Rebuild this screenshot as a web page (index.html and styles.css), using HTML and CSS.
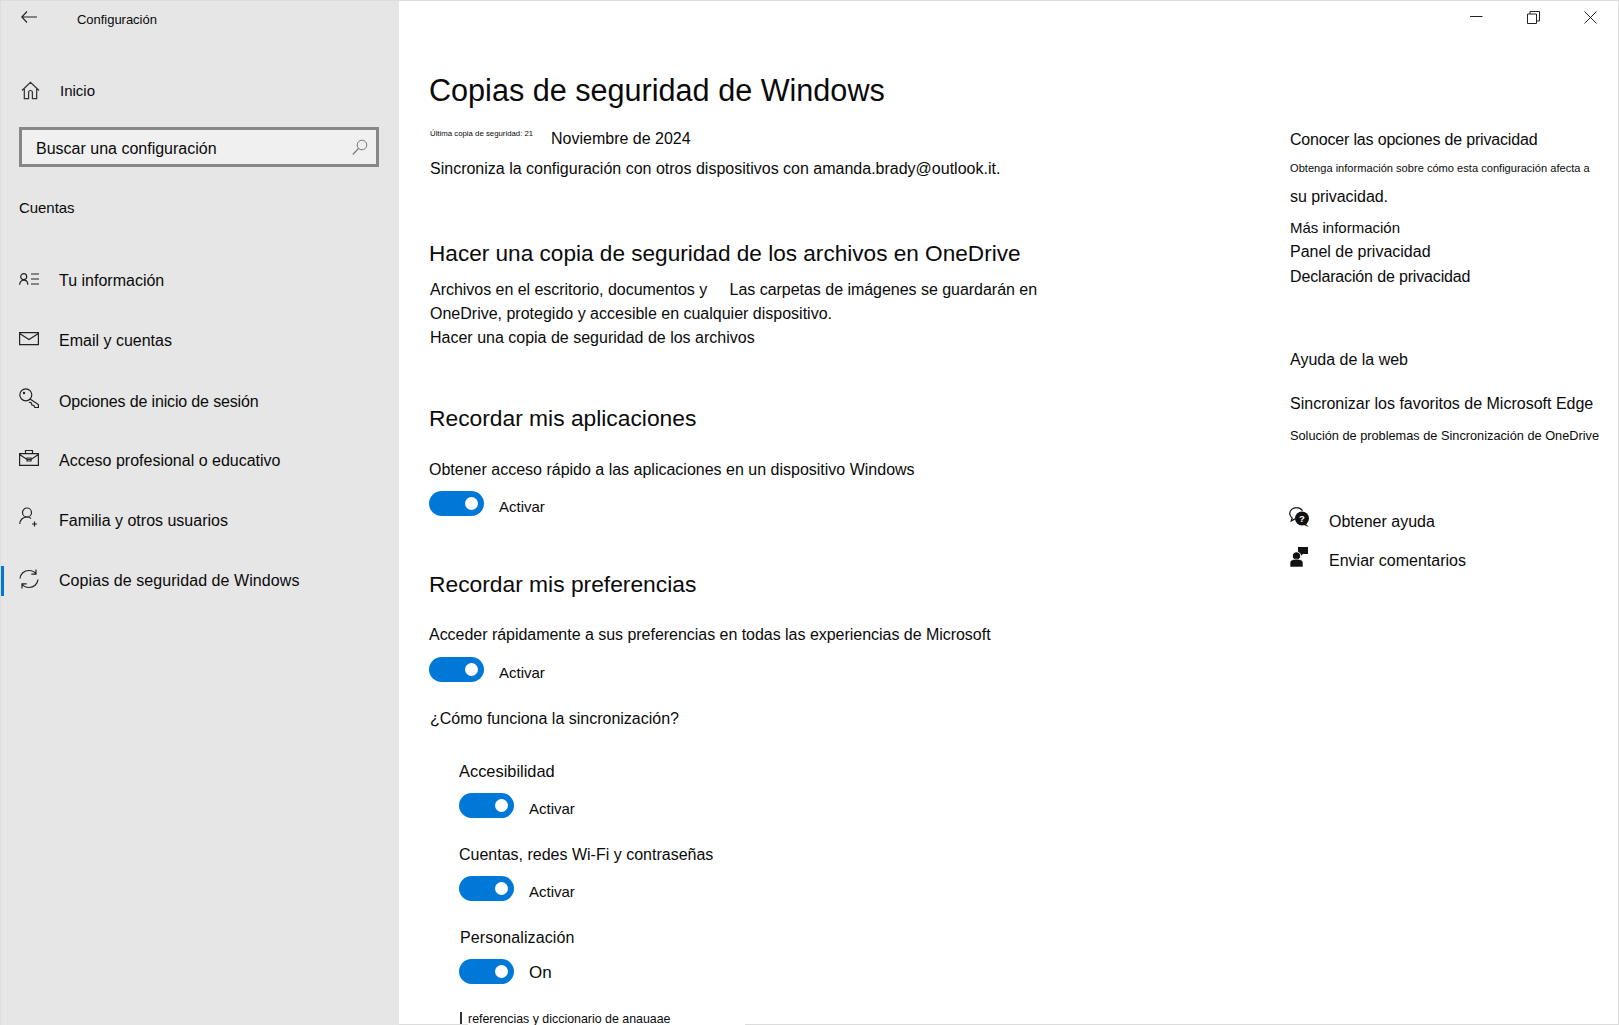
FILE: index.html
```html
<!DOCTYPE html>
<html lang="es">
<head>
<meta charset="utf-8">
<title>Configuración</title>
<link rel="stylesheet" href="styles.css">
</head>
<body>
<div class="window">
  <aside class="sidebar">
    <div class="titlebar">
      <svg class="back" viewBox="0 0 16 12" width="16" height="12"><path d="M6 .5.8 6 6 11.500M.8 6H16" fill="none" stroke="#222" stroke-width="1.100"/></svg>
      <span class="apptitle">Configuración</span>
    </div>
    <div class="home">
      <svg class="ico" viewBox="0 0 20 20" width="19" height="19"><path d="M1 10 10 1.500 19 10M3.500 8v10.500h4.500v-6.500a2 2 0 0 1 4 0v6.500h4.500V8" fill="none" stroke="#333" stroke-width="1.300"/></svg>
      <span>Inicio</span>
    </div>
    <div class="search">
      <span class="search-text">Buscar una configuración</span>
      <svg viewBox="0 0 16 16" width="16" height="16"><circle cx="10" cy="6" r="4.800" fill="none" stroke="#777" stroke-width="1"/><path d="M6.500 9.500 .8 15.500" stroke="#777" stroke-width="1.100"/></svg>
    </div>
    <div class="group">Cuentas</div>
    <nav class="nav">
      <a class="item it1"><svg viewBox="0 0 20 12" width="20" height="12"><circle cx="4.700" cy="3.700" r="3" fill="none" stroke="#222" stroke-width="1.200"/><path d="M.6 11.800c0-2.600 1.600-4.600 4.100-4.600s4.100 2 4.100 4.600M12 1h8M12 6h8M12 11h8" fill="none" stroke="#222" stroke-width="1.200"/></svg><span>Tu información</span></a>
      <a class="item it2"><svg viewBox="0 0 20 14" width="20" height="14"><path d="M.6.6h18.800v12H.6zM.6 1.500 10 7.500l9.400-6" fill="none" stroke="#222" stroke-width="1.200"/></svg><span>Email y cuentas</span></a>
      <a class="item it3"><svg viewBox="0 0 20 20" width="20" height="20"><circle cx="6.800" cy="6.800" r="6" fill="none" stroke="#222" stroke-width="1.200"/><circle cx="5" cy="5" r="1.200" fill="#222"/><path d="m11 11 8.400 5.500v3h-3.500l-1-2-2-.5-.5-2-2.500-1" fill="none" stroke="#222" stroke-width="1.200"/></svg><span class="tight">Opciones de inicio de sesión</span></a>
      <a class="item it4"><svg viewBox="0 0 20 16" width="20" height="16"><path d="M.6 3.600h18.800v11.800H.6zM6.500 3.500v-3h7v3M.6 4.500 8 9.500h4l7.400-5M8 8h4v3H8z" fill="none" stroke="#222" stroke-width="1.200"/></svg><span>Acceso profesional o educativo</span></a>
      <a class="item it5"><svg viewBox="0 0 20 20" width="20" height="20"><circle cx="8" cy="5.500" r="4.500" fill="none" stroke="#222" stroke-width="1.200"/><path d="M.8 17c0-4 3-7 7.200-7 1.500 0 3 .5 4 1.500M15.500 14.500v5M13 17h5" fill="none" stroke="#222" stroke-width="1.200"/></svg><span>Familia y otros usuarios</span></a>
      <a class="item it6 active"><svg viewBox="0 0 20 20" width="20" height="20"><path d="M1 9.500C1.500 5 5 1.500 10 1.500c3 0 5.500 1.300 7 3.500M17 .5V5.200h-4.700M19 10.500c-.5 4.500-4 8-9 8-3 0-5.500-1.300-7-3.500M3 19.500v-4.700h4.700" fill="none" stroke="#222" stroke-width="1.200"/></svg><span class="wide">Copias de seguridad de Windows</span></a>
    </nav>
  </aside>

  <main class="main">
    <div class="winctl">
      <svg viewBox="0 0 13 13" width="13" height="13"><path d="M0 5.500h12.500" stroke="#222" stroke-width="1"/></svg>
      <svg viewBox="0 0 13 13" width="13" height="13"><path d="M.5 3h9v9.500h-9zM3 3V.5h9.500V10H9.500" fill="none" stroke="#222" stroke-width="1"/></svg>
      <svg viewBox="0 0 13 13" width="13" height="13"><path d="m.5.5 12 12M12.500.5l-12 12" stroke="#222" stroke-width="1"/></svg>
    </div>
    <div class="columns">
      <section class="content">
        <h1 class="title">Copias de seguridad de Windows</h1>
        <div class="lastbackup"><span class="tiny">Última copia de seguridad: 21</span><span>Noviembre de 2024</span></div>
        <p class="sync">Sincroniza la configuración con otros dispositivos con amanda.brady@outlook.it.</p>

        <h2 class="h-onedrive">Hacer una copia de seguridad de los archivos en OneDrive</h2>
        <p class="line l1">Archivos en el escritorio, documentos y <span class="gap"></span>Las carpetas de imágenes se guardarán en</p>
        <p class="line">OneDrive, protegido y accesible en cualquier dispositivo.</p>
        <p class="line">Hacer una copia de seguridad de los archivos</p>

        <h2 class="h-apps">Recordar mis aplicaciones</h2>
        <p class="desc d1">Obtener acceso rápido a las aplicaciones en un dispositivo Windows</p>
        <div class="toggle-row r1"><span class="toggle"></span><span class="state">Activar</span></div>

        <h2 class="h-prefs">Recordar mis preferencias</h2>
        <p class="desc d2">Acceder rápidamente a sus preferencias en todas las experiencias de Microsoft</p>
        <div class="toggle-row r2"><span class="toggle"></span><span class="state">Activar</span></div>
        <p class="how">¿Cómo funciona la sincronización?</p>

        <div class="subs">
          <div class="sub"><p class="sublabel acc">Accesibilidad</p><div class="toggle-row"><span class="toggle"></span><span class="state">Activar</span></div></div>
          <div class="sub"><p class="sublabel">Cuentas, redes Wi-Fi y contraseñas</p><div class="toggle-row r4"><span class="toggle"></span><span class="state">Activar</span></div></div>
          <div class="sub"><p class="sublabel nudge">Personalización</p><div class="toggle-row r3"><span class="toggle"></span><span class="state big">On</span></div></div>
          <p class="cutoff">referencias y diccionario de anauaae</p>
        </div>
      </section>

      <aside class="side">
        <p class="s-head">Conocer las opciones de privacidad</p>
        <p class="s-small">Obtenga información sobre cómo esta configuración afecta a</p>
        <p class="s-priv">su privacidad.</p>
        <p class="s-link first">Más información</p>
        <p class="s-link">Panel de privacidad</p>
        <p class="s-link decl">Declaración de privacidad</p>
        <p class="s-web">Ayuda de la web</p>
        <p class="s-edge">Sincronizar los favoritos de Microsoft Edge</p>
        <p class="s-small2">Solución de problemas de Sincronización de OneDrive</p>
        <div class="s-action first-act">
          <svg class="help" viewBox="0 0 20 20" width="20" height="20"><path d="M7.500 .7C3.700 .7.700 3.200.7 6.500c0 1.900 1 3.400 2.500 4.400L2.200 14l3.800-2.100" fill="#fff" stroke="#111" stroke-width="1.200"/><path d="M7.500 .7c2.600 0 4.800 1.200 6 3" fill="none" stroke="#111" stroke-width="1.200"/><circle cx="13" cy="11.500" r="7" fill="#111"/><path d="m16 16 3.800 4-6-2.500z" fill="#111"/><text class="qmark" x="13" y="15" text-anchor="middle">?</text></svg>
          <span>Obtener ayuda</span>
        </div>
        <div class="s-action">
          <svg class="send" viewBox="0 0 18 20" width="18" height="20"><path d="M8 0h10v7h-5l-2.500 2.200V7H8z" fill="#111"/><circle cx="6.500" cy="9" r="4.200" fill="#111" stroke="#fff" stroke-width="1"/><path d="M0 20v-4c0-3 3-3.800 6.500-3.800s6.500 .8 6.500 3.800v4z" fill="#111" stroke="#fff" stroke-width=".6"/></svg>
          <span>Enviar comentarios</span>
        </div>
      </aside>
    </div>
  </main>
</div>
</body>
</html>
```
FILE: styles.css
```css
* { box-sizing: border-box; }
html, body { margin: 0; height: 100%; overflow: hidden; background: #fff; }
body { font-family: "Liberation Sans", Arial, sans-serif; font-size: 16px; color: #0a0a0a; }
p, h1, h2 { margin: 0; font-weight: 400; }

.window { display: flex; width: 1619px; height: 1025px; overflow: hidden; border-top: 1px solid #dcdcdc; border-left: 1px solid #dcdcdc; border-right: 1px solid #dcdcdc; }

/* Sidebar */
.sidebar { width: 398px; flex: none; background: #e6e6e6; display: flex; flex-direction: column; padding-left: 18px; padding-right: 20px; }
.titlebar { height: 36px; display: flex; align-items: flex-start; padding-left: 2px; }
.back { margin-top: 10px; }
.apptitle { margin-left: 40px; margin-top: 11px; font-size: 13px; line-height: 16px; letter-spacing: -.03px; }
.home { height: 40px; display: flex; align-items: center; margin-top: 33px; padding-left: 2px; gap: 20px; font-size: 15px; }
.search { height: 40px; flex: none; border: 3px solid #878787; background: #f0f0f0; display: flex; align-items: center; justify-content: space-between; padding: 0 8px 0 14px; margin-top: 17px; font-size: 16px; }
.search-text { padding-top: 4px; }
.group { margin-top: 32px; font-size: 15px; line-height: 18px; letter-spacing: -.05px; }
.nav { display: flex; flex-direction: column; margin-top: 49px; }
.item { display: flex; align-items: center; height: 30px; font-size: 16px; position: relative; }
.item svg { flex: none; margin-bottom: 4px; }
.item span { margin-left: 20px; }
.it2, .it5, .it6 { margin-top: 30px; }
.it3 { margin-top: 31px; }
.it3 svg { margin-bottom: 8px; }
.it4 { margin-top: 29px; }
.it4 svg { margin-bottom: 6px; }
.it5 svg { margin-bottom: 8px; }
.tight { letter-spacing: -.15px; }
.wide { letter-spacing: .07px; }
.active::before { content: ""; position: absolute; left: -18px; top: 0; width: 3px; height: 30px; background: #0078d7; }

/* Main */
.main { flex: 1; min-width: 0; position: relative; border-bottom: 1px solid #dcdcdc; }
.winctl { position: absolute; top: 10px; right: 21px; display: flex; gap: 44px; }
.columns { display: flex; }
.content { width: 891px; flex: none; padding-left: 30px; }
.side { flex: 1; min-width: 0; }

.title { margin-top: 69px; font-size: 30.600px; line-height: 40px; }
.lastbackup { display: flex; align-items: flex-start; margin-top: 19px; margin-left: 1px; font-size: 16px; line-height: 20px; }
.tiny { font-size: 7.800px; line-height: 10px; width: 121px; }
.sync { margin-top: 10px; margin-left: 1px; font-size: 16px; line-height: 20px; }
h2 { font-size: 22.600px; line-height: 30px; }
.h-onedrive { margin-top: 60px; }
.line { font-size: 16px; line-height: 24px; margin-left: 1px; }
.l1 { margin-top: 9px; letter-spacing: -.03px; }
.gap { display: inline-block; width: 18px; }
.h-apps { margin-top: 53px; font-size: 22.800px; }
.desc { font-size: 16px; line-height: 20px; margin-top: 26px; }
.d1 { margin-top: 27px; }
.d2 { margin-top: 26px; letter-spacing: -.03px; }
.toggle-row { display: flex; align-items: center; margin-top: 11px; height: 26px; }
.r1 { margin-top: 10px; }
.r2 { margin-top: 11px; }
.r3 { margin-top: 10px; }
.r4 { margin-top: 10px; }
.toggle { width: 55px; height: 25px; border-radius: 13px; background: #0078d7; position: relative; flex: none; }
.toggle::after { content: ""; position: absolute; right: 6px; top: 6px; width: 13px; height: 13px; border-radius: 50%; background: #fff; }
.state { margin-left: 15px; font-size: 15px; position: relative; top: 3px; }
.big { font-size: 17px; top: 2px; }
.h-prefs { margin-top: 53px; font-size: 22.800px; }
.how { font-size: 16px; line-height: 20px; margin-top: 27px; margin-left: 1px; }
.subs { padding-left: 30px; }
.sublabel { font-size: 16px; line-height: 20px; margin-top: 27px; }
.acc { font-size: 16.400px; margin-top: 32px; }
.nudge { margin-left: 1px; margin-top: 27px; letter-spacing: .1px; }
.cutoff { font-size: 12.400px; line-height: 14px; margin-top: 28px; margin-left: 9px; width: 277px; background: #fff; position: relative; white-space: nowrap; }
.cutoff::before { content: ""; position: absolute; left: -8px; top: 0; width: 2px; height: 12px; background: #333; }

/* Right column */
.side p { white-space: nowrap; }
.s-head { margin-top: 129px; font-size: 16px; line-height: 20px; letter-spacing: -.18px; }
.s-small { margin-top: 10px; font-size: 11.100px; line-height: 16px; }
.s-priv { margin-top: 11px; font-size: 16px; line-height: 20px; letter-spacing: -.05px; }
.s-link { font-size: 16px; line-height: 24px; }
.s-link.first { margin-top: 9px; font-size: 15px; }
.decl { margin-top: 1px; letter-spacing: -.15px; }
.s-web { margin-top: 61px; font-size: 16px; line-height: 20px; }
.s-edge { margin-top: 24px; font-size: 16px; line-height: 20px; }
.s-small2 { margin-top: 14px; font-size: 12.750px; line-height: 16px; }
.s-action { display: flex; align-items: center; height: 24px; font-size: 16px; }
.first-act { margin-top: 66px; }
.s-action + .s-action { margin-top: 15px; }
.s-action svg { flex: none; }
.help { margin-right: 20px; margin-left: -1px; margin-bottom: 10px; }
.send { margin-right: 21px; margin-bottom: 8px; }
.qmark { font-size: 9.500px; font-weight: 700; fill: #fff; }
```
